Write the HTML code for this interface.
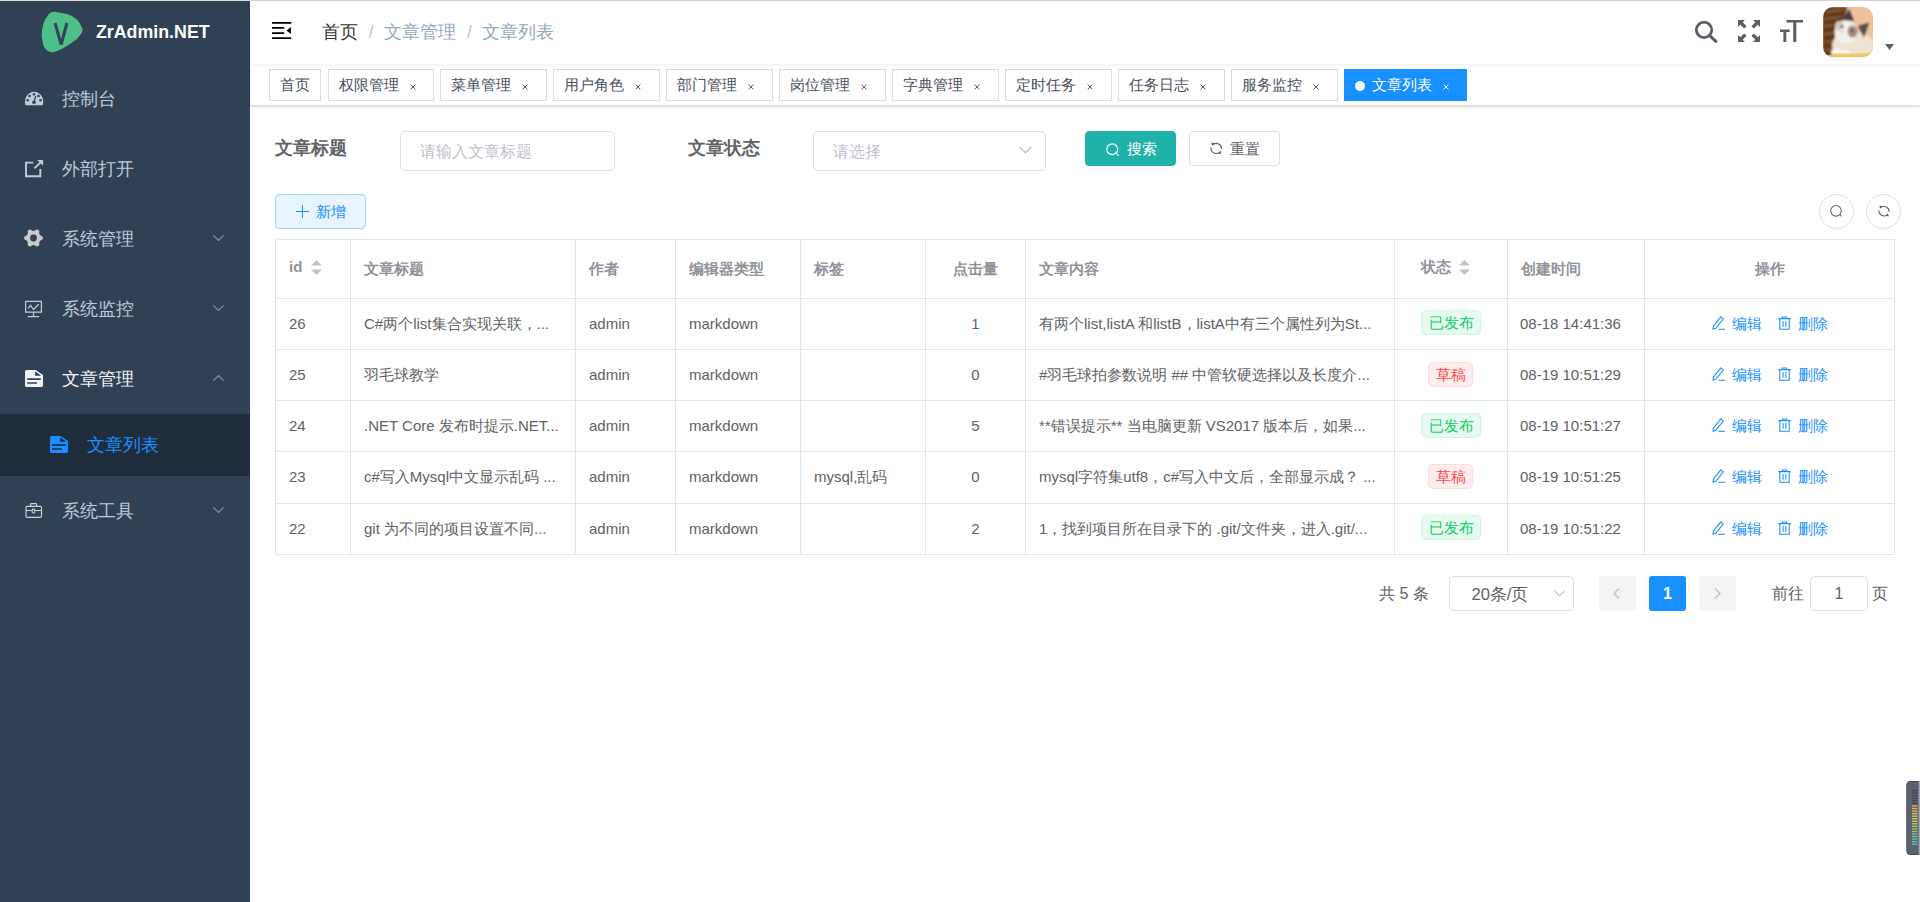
<!DOCTYPE html>
<html><head><meta charset="utf-8">
<style>
*{box-sizing:border-box;margin:0;padding:0}
html,body{width:1920px;height:902px;overflow:hidden;background:#fff;font-family:"Liberation Sans",sans-serif;}
.abs{position:absolute}
#topline{position:absolute;left:0;top:0;width:1920px;height:1px;background:#d2d2d2;z-index:5}
#topline i{position:absolute;left:0;top:0;width:250px;height:1px;background:#dedcd9}
#side{position:absolute;left:0;top:1px;width:250px;height:901px;background:#304156}
#logo{position:absolute;left:42px;top:10px;width:40px;height:40px}
#logotxt{position:absolute;left:96px;top:21px;font-size:17.8px;font-weight:bold;color:#fff;line-height:21px}
.mi{position:absolute;left:0;width:250px;height:70px;color:#bfcbd9;font-size:17.5px}
.mi .ic{position:absolute;left:25px;top:26px;width:18px;height:18px}
.mi .tx{position:absolute;left:62px;top:0;line-height:70px}
.mi .ch{position:absolute;left:212.5px;top:30.8px;width:11px;height:6px}
#sub{position:absolute;left:0;top:413px;width:250px;height:62px;background:#1f2d3d}

#nav{position:absolute;left:250px;top:1px;width:1670px;height:63px;background:#fff;z-index:2;box-shadow:0 1px 4px rgba(0,21,41,.08)}
#tags{position:absolute;left:250px;top:64px;width:1670px;height:42px;background:#fff;border-bottom:1px solid #d8dce5;box-shadow:0 1px 3px 0 rgba(0,0,0,.12),0 0 3px 0 rgba(0,0,0,.04);z-index:1}
.tag{position:absolute;top:5px;height:32px;border:1px solid #d8dce5;color:#495060;background:#fff;font-size:15px;line-height:30px;padding-left:10px;white-space:nowrap}
.tag .x{position:absolute;top:0;font-size:11px;color:#495060}

.lbl{position:absolute;font-size:17.5px;font-weight:bold;color:#606266;line-height:20px;white-space:nowrap}
.inp{position:absolute;border:1px solid #dcdfe6;border-radius:5px;background:#fff;height:40px}
.ph{position:absolute;left:19px;top:0;line-height:38px;font-size:16.25px;color:#c0c4cc;white-space:nowrap}
.btn{position:absolute;height:35px;border-radius:4px;font-size:15px;line-height:33px;white-space:nowrap}
#tbl{position:absolute;left:275px;top:239px;width:1620px;height:316px;border-left:1px solid #dfe6ec;border-top:1px solid #dfe6ec}
.row{position:absolute;left:0;width:1619px;border-bottom:1px solid #dfe6ec}
.c{position:absolute;top:0;height:100%;border-right:1px solid #dfe6ec;font-size:15px;color:#606266;white-space:nowrap;overflow:hidden;padding-left:13px}
.hd .c{color:#909399;font-weight:bold}
.stag{position:absolute;top:11px;height:25px;border:1px solid;border-radius:5px;font-size:15px;line-height:23px;text-align:center}
.ok{background:#e7faf0;border-color:#d0f5e0;color:#13ce66}
.dr{background:#ffeded;border-color:#ffdbdb;color:#ff4949}
.op{position:absolute;top:0;font-size:15px;color:#1890ff;white-space:nowrap}
</style></head><body>
<div id="topline"><i></i></div>
<div id="side">
  <svg id="logo" viewBox="0 0 40 40" style="overflow:visible"><path d="M14.30 0.90C17.34 1.23 23.58 2.37 27.00 3.65C30.42 4.93 32.67 6.47 34.80 8.60C36.93 10.72 38.92 14.37 39.80 16.40C40.68 18.43 40.93 18.87 40.10 20.80C39.27 22.73 37.53 25.50 34.80 28.00C32.07 30.50 27.12 33.77 23.70 35.80C20.28 37.83 16.79 39.33 14.30 40.20C11.81 41.07 10.69 41.55 8.75 41.00C6.81 40.45 4.08 39.07 2.65 36.90C1.22 34.73 0.62 30.77 0.16 28.00C-0.30 25.23 -0.42 23.15 -0.10 20.30C0.22 17.45 1.08 13.58 2.10 10.90C3.12 8.22 4.89 5.73 6.00 4.20C7.11 2.67 7.37 2.25 8.75 1.70C10.13 1.15 11.26 0.57 14.30 0.90Z" fill="#4ebf88"/><path d="M13.1 12L19.2 33.6M24.9 12L19.2 33.6" stroke="#34455a" stroke-width="3.1" stroke-linejoin="round"/></svg>
  <div id="logotxt">ZrAdmin.NET</div>

  <div class="mi" style="top:63px"><svg class="ic" style="top:26px;height:16px;width:19px" viewBox="0 0 19 16"><path d="M0.6 15.3A9.1 10 0 1 1 17.6 15.3Z" fill="#bfcbd9"/><g fill="#304156"><circle cx="2.7" cy="10.3" r="1.3"/><circle cx="4.5" cy="6" r="1.3"/><circle cx="9" cy="4.2" r="1.3"/><circle cx="13.5" cy="6" r="1.3"/><circle cx="15.5" cy="10.3" r="1.3"/><circle cx="9" cy="12.3" r="1.8"/></g><path d="M10.6 6.3L9 12.3" stroke="#304156" stroke-width="1.3" stroke-linecap="round"/></svg><span class="tx">控制台</span></div>
  <div class="mi" style="top:133px"><svg class="ic" style="top:25px;width:19px;height:19px" viewBox="0 0 19 19"><path d="M8.3 3.6H1V17.2H15.3V10" fill="none" stroke="#bfcbd9" stroke-width="1.9"/><path d="M12.2 0.9H18.1V6.8Z" fill="#bfcbd9"/><path d="M9.4 9.4L16.2 2.8" stroke="#bfcbd9" stroke-width="1.9"/></svg><span class="tx">外部打开</span></div>
  <div class="mi" style="top:203px"><svg class="ic" style="left:24px;top:25px;width:19px;height:18px" viewBox="0 0 19 18"><path fill="#c9cacd" fill-rule="evenodd" d="M18.85 9.00 L18.80 9.49 L18.66 9.96 L18.42 10.41 L18.08 10.82 L17.42 11.12 L16.76 11.36 L16.37 11.64 L16.07 11.92 L15.81 12.22 L15.61 12.52 L15.44 12.86 L15.31 13.22 L15.22 13.63 L15.17 14.11 L15.30 14.80 L15.37 15.52 L15.19 16.02 L14.92 16.45 L14.57 16.81 L14.18 17.10 L13.73 17.30 L13.25 17.42 L12.74 17.44 L12.21 17.34 L11.62 16.92 L11.09 16.46 L10.65 16.27 L10.25 16.15 L9.87 16.07 L9.50 16.05 L9.13 16.07 L8.75 16.15 L8.35 16.27 L7.91 16.46 L7.38 16.92 L6.79 17.34 L6.26 17.44 L5.75 17.42 L5.27 17.30 L4.83 17.10 L4.43 16.81 L4.08 16.45 L3.81 16.02 L3.63 15.52 L3.70 14.80 L3.83 14.11 L3.78 13.63 L3.69 13.22 L3.56 12.86 L3.39 12.52 L3.19 12.22 L2.93 11.92 L2.63 11.64 L2.24 11.36 L1.58 11.12 L0.92 10.82 L0.58 10.41 L0.34 9.96 L0.20 9.49 L0.15 9.00 L0.20 8.51 L0.34 8.04 L0.58 7.59 L0.92 7.18 L1.58 6.88 L2.24 6.64 L2.63 6.36 L2.93 6.08 L3.19 5.78 L3.39 5.48 L3.56 5.14 L3.69 4.78 L3.78 4.37 L3.83 3.89 L3.70 3.20 L3.63 2.48 L3.81 1.98 L4.08 1.55 L4.43 1.19 L4.82 0.90 L5.27 0.70 L5.75 0.58 L6.26 0.56 L6.79 0.66 L7.38 1.08 L7.91 1.54 L8.35 1.73 L8.75 1.85 L9.13 1.93 L9.50 1.95 L9.87 1.93 L10.25 1.85 L10.65 1.73 L11.09 1.54 L11.62 1.08 L12.21 0.66 L12.74 0.56 L13.25 0.58 L13.73 0.70 L14.18 0.90 L14.57 1.19 L14.92 1.55 L15.19 1.98 L15.37 2.48 L15.30 3.20 L15.17 3.89 L15.22 4.37 L15.31 4.78 L15.44 5.14 L15.61 5.48 L15.81 5.78 L16.07 6.08 L16.37 6.36 L16.76 6.64 L17.42 6.88 L18.08 7.18 L18.42 7.59 L18.66 8.04 L18.80 8.51Z M9.5 5.6A3.4 3.4 0 1 0 9.5 12.4A3.4 3.4 0 1 0 9.5 5.6Z"/></svg><span class="tx">系统管理</span><svg class="ch" viewBox="0 0 11 6"><path d="M0.4 0.4L5.5 5.5L10.6 0.4" fill="none" stroke="#8a94a3" stroke-width="1.1"/></svg></div>
  <div class="mi" style="top:273px"><svg class="ic" style="top:26px" viewBox="0 0 18 18"><path d="M0.6 1.4H16.4V12.2H0.6Z" fill="none" stroke="#bfcbd9" stroke-width="1.25"/><path d="M3.2 8.4L5.5 5.3L8.5 9.5L13.7 4.3" fill="none" stroke="#bfcbd9" stroke-width="1.25"/><path d="M8.5 12.5V16.4M3.2 16.5H13.8" fill="none" stroke="#bfcbd9" stroke-width="1.25" stroke-linecap="round"/></svg><span class="tx">系统监控</span><svg class="ch" viewBox="0 0 11 6"><path d="M0.4 0.4L5.5 5.5L10.6 0.4" fill="none" stroke="#8a94a3" stroke-width="1.1"/></svg></div>
  <div class="mi" style="top:343px;color:#f4f4f5"><svg class="ic" style="top:26px;height:17px" viewBox="0 0 18 17"><path d="M1.8 0H10.7L18 5V15.2C18 16.2 17.2 17 16.2 17H1.8C0.8 17 0 16.2 0 15.2V1.8C0 0.8 0.8 0 1.8 0Z" fill="#f4f4f5"/><path d="M10.2 1.2V5.8H16.2Z" fill="#304156"/><path d="M2.2 9.15H15.8M2.2 12.95H12" stroke="#304156" stroke-width="1.6"/></svg><span class="tx">文章管理</span><svg class="ch" style="top:31px" viewBox="0 0 11 6"><path d="M0.4 5.6L5.5 0.5L10.6 5.6" fill="none" stroke="#8a94a3" stroke-width="1.1"/></svg></div>
  <div id="sub"><svg class="abs" style="left:50px;top:22px;width:18px;height:17px" viewBox="0 0 18 17"><path d="M1.8 0H10.7L18 5V15.2C18 16.2 17.2 17 16.2 17H1.8C0.8 17 0 16.2 0 15.2V1.8C0 0.8 0.8 0 1.8 0Z" fill="#1890ff"/><path d="M10.2 1.2V5.8H16.2Z" fill="#1f2d3d"/><path d="M2.2 9.15H15.8M2.2 12.95H12" stroke="#1f2d3d" stroke-width="1.6"/></svg><span class="abs" style="left:87px;top:0;line-height:62px;font-size:17.5px;color:#1890ff">文章列表</span></div>
  <div class="mi" style="top:475px"><svg class="ic" style="top:27px;height:17px" viewBox="0 0 18 17"><g fill="none" stroke="#cdd0d5" stroke-width="1.15"><rect x="1" y="3.3" width="15.5" height="11" rx="1"/><path d="M5.6 3.3V1.3Q5.6 0.6 6.3 0.6H10.9Q11.6 0.6 11.6 1.3V3.3M1 7.5H7.2M9.8 7.5H16.5"/><rect x="7.2" y="6.1" width="2.6" height="3.9" rx="1.1"/></g></svg><span class="tx">系统工具</span><svg class="ch" viewBox="0 0 11 6"><path d="M0.4 0.4L5.5 5.5L10.6 0.4" fill="none" stroke="#8a94a3" stroke-width="1.1"/></svg></div>
</div>

<div id="nav">
  <svg class="abs" style="left:22px;top:20px;width:20px;height:19px" viewBox="0 0 20 19"><path d="M0.7 1.9H18.5M0.7 6.9H11.5M0.7 12.1H11.5M0.7 17.1H18.5" stroke="#000" stroke-width="1.8" stroke-linecap="round"/><path d="M18.9 5.9L14.6 9.4L18.9 12.9Z" fill="#000"/></svg>
  <div class="abs" style="left:72px;top:0;line-height:63px;font-size:17.5px;color:#303133;white-space:nowrap">首页<span style="color:#c0c4cc;margin:0 10.5px 0 10.75px">/</span><span style="color:#97a8be">文章管理</span><span style="color:#c0c4cc;margin:0 10.5px 0 10.75px">/</span><span style="color:#97a8be">文章列表</span></div>
  <svg class="abs" style="left:1445px;top:20px;width:24px;height:23px" viewBox="0 0 24 23"><circle cx="9.06" cy="8.9" r="7.7" fill="none" stroke="#5a5e66" stroke-width="2.8"/><path d="M15 14.8L20.9 20.3" stroke="#5a5e66" stroke-width="3.1" stroke-linecap="round"/></svg>
  <svg class="abs" style="left:1488px;top:19px;width:22px;height:22px" viewBox="0 0 22 22"><g fill="#5a5e66"><path d="M0 0H7L4.7 2.3L8.6 6.2L6.2 8.6L2.3 4.7L0 7Z"/><path d="M22 0V7L19.7 4.7L15.8 8.6L13.4 6.2L17.3 2.3L15 0Z"/><path d="M0 22V15L2.3 17.3L6.2 13.4L8.6 15.8L4.7 19.7L7 22Z"/><path d="M22 22H15L17.3 19.7L13.4 15.8L15.8 13.4L19.7 17.3L22 15Z"/></g></svg>
  <svg class="abs" style="left:1530px;top:19px;width:23px;height:22px" viewBox="0 0 23 22"><g fill="#5a5e66"><path d="M6.5 0H23V2.4H16.3V22H13.2V2.4H6.5Z"/><path d="M0 9.5H9.7V11.9H6.3V22H3.4V11.9H0Z"/></g></svg>
  <svg class="abs" style="left:1573px;top:6px;width:50px;height:50px" viewBox="0 0 50 50"><defs><clipPath id="av"><rect width="50" height="50" rx="10"/></clipPath><filter id="bl"><feGaussianBlur stdDeviation="0.8"/></filter></defs><g clip-path="url(#av)"><rect width="50" height="50" fill="#efc29b"/><g filter="url(#bl)"><path d="M0 0H24C23 8 18 16 13 24C11 32 10 40 9 50H0Z" fill="#5e3b1f"/><path d="M2 5L20 3M2 12L17 10M2 19L14 18M2 27L11 26M2 35L10 34M2 43L9 42" stroke="#8e5d32" stroke-width="2.2"/><ellipse cx="30" cy="38" rx="21" ry="13" fill="#efe3d3"/><ellipse cx="23" cy="25" rx="11.5" ry="11.5" fill="#f3efeb"/><path d="M19 13L26 2L31 14Z" fill="#4b3d3c"/><path d="M35 19L46 15.5L41 31Z" fill="#5b4b49"/><ellipse cx="29.5" cy="24.5" rx="5" ry="6" fill="#a58a7a"/><ellipse cx="16" cy="19" rx="4" ry="5" fill="#d5cac4"/><circle cx="19" cy="19.5" r="1.5" fill="#33477a"/><circle cx="29" cy="23.5" r="1.5" fill="#33477a"/><circle cx="19" cy="24.8" r="1" fill="#e59a92"/><ellipse cx="13" cy="45" rx="5" ry="3.5" fill="#fbf8f5"/><ellipse cx="22" cy="46" rx="5" ry="3.5" fill="#f8f3ee"/></g><path d="M8 46.5H50V50H8Z" fill="#f2c35e" filter="url(#bl)"/><rect x="0" y="48" width="50" height="2" fill="#f2c35e"/></g></svg>
  <svg class="abs" style="left:1635px;top:43px;width:9px;height:6px" viewBox="0 0 9 6"><path d="M0 0H9L4.5 6Z" fill="#5a5e66"/></svg>
</div>
<div id="tags">
  <div class="tag" style="left:19px;width:52px">首页</div>
  <div class="tag" style="left:78px;width:106px">权限管理<svg class="x" style="left:80.5px;top:14px;width:6px;height:6px" viewBox="0 0 6 6"><path d="M0.5 0.5L5.5 5.5M5.5 0.5L0.5 5.5" stroke="#495060" stroke-width="0.9"/></svg></div>
<div class="tag" style="left:190px;width:107px">菜单管理<svg class="x" style="left:80.5px;top:14px;width:6px;height:6px" viewBox="0 0 6 6"><path d="M0.5 0.5L5.5 5.5M5.5 0.5L0.5 5.5" stroke="#495060" stroke-width="0.9"/></svg></div>
<div class="tag" style="left:303px;width:107px">用户角色<svg class="x" style="left:80.5px;top:14px;width:6px;height:6px" viewBox="0 0 6 6"><path d="M0.5 0.5L5.5 5.5M5.5 0.5L0.5 5.5" stroke="#495060" stroke-width="0.9"/></svg></div>
<div class="tag" style="left:416px;width:107px">部门管理<svg class="x" style="left:80.5px;top:14px;width:6px;height:6px" viewBox="0 0 6 6"><path d="M0.5 0.5L5.5 5.5M5.5 0.5L0.5 5.5" stroke="#495060" stroke-width="0.9"/></svg></div>
<div class="tag" style="left:529px;width:107px">岗位管理<svg class="x" style="left:80.5px;top:14px;width:6px;height:6px" viewBox="0 0 6 6"><path d="M0.5 0.5L5.5 5.5M5.5 0.5L0.5 5.5" stroke="#495060" stroke-width="0.9"/></svg></div>
<div class="tag" style="left:642px;width:107px">字典管理<svg class="x" style="left:80.5px;top:14px;width:6px;height:6px" viewBox="0 0 6 6"><path d="M0.5 0.5L5.5 5.5M5.5 0.5L0.5 5.5" stroke="#495060" stroke-width="0.9"/></svg></div>
<div class="tag" style="left:755px;width:107px">定时任务<svg class="x" style="left:80.5px;top:14px;width:6px;height:6px" viewBox="0 0 6 6"><path d="M0.5 0.5L5.5 5.5M5.5 0.5L0.5 5.5" stroke="#495060" stroke-width="0.9"/></svg></div>
<div class="tag" style="left:868px;width:107px">任务日志<svg class="x" style="left:80.5px;top:14px;width:6px;height:6px" viewBox="0 0 6 6"><path d="M0.5 0.5L5.5 5.5M5.5 0.5L0.5 5.5" stroke="#495060" stroke-width="0.9"/></svg></div>
<div class="tag" style="left:981px;width:107px">服务监控<svg class="x" style="left:80.5px;top:14px;width:6px;height:6px" viewBox="0 0 6 6"><path d="M0.5 0.5L5.5 5.5M5.5 0.5L0.5 5.5" stroke="#495060" stroke-width="0.9"/></svg></div>
<div class="tag" style="left:1094px;width:123px;background:#1890ff;border-color:#1890ff;color:#fff;padding-left:27px"><i class="abs" style="left:10px;top:11px;width:10px;height:10px;border-radius:50%;background:#fff"></i>文章列表<svg class="x" style="left:98px;top:14px;width:6px;height:6px" viewBox="0 0 6 6"><path d="M0.5 0.5L5.5 5.5M5.5 0.5L0.5 5.5" stroke="#fff" stroke-width="0.9"/></svg></div>

</div>

<div class="lbl" style="left:275px;top:138px">文章标题</div>
<div class="inp" style="left:400px;top:131px;width:215px"><span class="ph">请输入文章标题</span></div>
<div class="lbl" style="left:688px;top:138px">文章状态</div>
<div class="inp" style="left:813px;top:131px;width:233px"><span class="ph">请选择</span><svg class="abs" style="left:205px;top:14px;width:13px;height:8px" viewBox="0 0 13 8"><path d="M0.5 0.8L6.5 6.8L12.5 0.8" fill="none" stroke="#c0c4cc" stroke-width="1.3"/></svg></div>
<div class="btn" style="left:1085px;top:131px;width:91px;background:#20b2aa;color:#fff;border:1px solid #20b2aa"><svg class="abs" style="left:19.5px;top:11px;width:14px;height:14px" viewBox="0 0 14 14"><circle cx="6.2" cy="6.2" r="5.4" fill="none" stroke="#fff" stroke-width="1.15"/><path d="M10.1 10.1L12.6 12.6" stroke="#fff" stroke-width="1.15"/></svg><span class="abs" style="left:40.5px;top:0">搜索</span></div>
<div class="btn" style="left:1189px;top:131px;width:91px;background:#fff;color:#606266;border:1px solid #dcdfe6"><svg class="abs" style="left:20px;top:9.5px;width:12.5px;height:12.5px" viewBox="0 0 12.2 12.2"><path d="M3 2.4A5.2 5.2 0 0 1 11.3 6.8" fill="none" stroke="#606266" stroke-width="1.1"/><path d="M9.2 10.1A5.2 5.2 0 0 1 0.9 5.4" fill="none" stroke="#606266" stroke-width="1.1"/><path d="M1.3 0.6L4.5 1.3L2.2 3.8Z" fill="#606266"/><path d="M11 11.6L7.8 10.9L10.1 8.4Z" fill="#606266"/></svg><span class="abs" style="left:40px;top:0">重置</span></div>
<div class="btn" style="left:275px;top:194px;width:91px;background:#e8f4ff;color:#1890ff;border:1px solid #a3d3ff"><svg class="abs" style="left:20px;top:10px;width:13px;height:13px" viewBox="0 0 13 13"><path d="M6.5 0V13M0 6.5H13" stroke="#1890ff" stroke-width="1"/></svg><span class="abs" style="left:40px;top:0">新增</span></div>
<div class="abs" style="left:1819px;top:194px;width:35px;height:35px;border:1px solid #dcdfe6;border-radius:50%"><svg class="abs" style="left:10px;top:9px;width:14px;height:14px" viewBox="0 0 14 14"><circle cx="6" cy="6.8" r="5.3" fill="none" stroke="#606266" stroke-width="1.05"/><path d="M9.8 10.6L11.6 12.4" stroke="#606266" stroke-width="1.05"/></svg></div>
<div class="abs" style="left:1866px;top:194px;width:35px;height:35px;border:1px solid #dcdfe6;border-radius:50%"><svg class="abs" style="left:10.5px;top:10.2px;width:12px;height:12px" viewBox="0 0 12.2 12.2"><path d="M3 2.4A5.2 5.2 0 0 1 11.3 6.8" fill="none" stroke="#606266" stroke-width="1.1"/><path d="M9.2 10.1A5.2 5.2 0 0 1 0.9 5.4" fill="none" stroke="#606266" stroke-width="1.1"/><path d="M1.3 0.6L4.5 1.3L2.2 3.8Z" fill="#606266"/><path d="M11 11.6L7.8 10.9L10.1 8.4Z" fill="#606266"/></svg></div>
<div id="tbl">
<div class="row hd" style="top:0;height:59px"><div class="c" style="left:0px;width:75px;line-height:58px"><span class="abs" style="left:13px;top:-2px">id</span><svg class="abs" style="left:35px;top:20px;width:11px;height:15px" viewBox="0 0 11 15"><path d="M5.5 0L11 5.5H0Z" fill="#c0c4cc"/><path d="M5.5 15L11 9.5H0Z" fill="#c0c4cc"/></svg></div><div class="c" style="left:75px;width:225px;line-height:58px">文章标题</div><div class="c" style="left:300px;width:100px;line-height:58px">作者</div><div class="c" style="left:400px;width:125px;line-height:58px">编辑器类型</div><div class="c" style="left:525px;width:125px;line-height:58px">标签</div><div class="c" style="left:650px;width:100px;line-height:58px;text-align:center;padding-left:0">点击量</div><div class="c" style="left:750px;width:369px;line-height:58px">文章内容</div><div class="c" style="left:1119px;width:113px;line-height:58px;padding-left:0"><span class="abs" style="left:26px;top:-2px">状态</span><svg class="abs" style="left:64px;top:20px;width:11px;height:15px" viewBox="0 0 11 15"><path d="M5.5 0L11 5.5H0Z" fill="#c0c4cc"/><path d="M5.5 15L11 9.5H0Z" fill="#c0c4cc"/></svg></div><div class="c" style="left:1232px;width:137px;line-height:58px">创建时间</div><div class="c" style="left:1369px;width:250px;line-height:58px;text-align:center;padding-left:0">操作</div></div>
<div class="row" style="top:59px;height:51px"><div class="c" style="left:0px;width:75px;line-height:50px">26</div><div class="c" style="left:75px;width:225px;line-height:50px">C#两个list集合实现关联，...</div><div class="c" style="left:300px;width:100px;line-height:50px">admin</div><div class="c" style="left:400px;width:125px;line-height:50px">markdown</div><div class="c" style="left:525px;width:125px;line-height:50px"></div><div class="c" style="left:650px;width:100px;line-height:50px;text-align:center;padding-left:0">1</div><div class="c" style="left:750px;width:369px;line-height:50px">有两个list,listA 和listB，listA中有三个属性列为St...</div><div class="c" style="left:1119px;width:113px;line-height:50px"><span class="stag ok" style="left:26px;width:60px;top:11px">已发布</span></div><div class="c" style="left:1232px;width:137px;line-height:50px;padding-left:12px">08-18 14:41:36</div><div class="c" style="left:1369px;width:250px;line-height:50px"><span class="op" style="left:66px"><svg class="abs" style="left:0;top:17px;width:15px;height:15px" viewBox="0 0 15 15"><path d="M1.9 13.2L5.07 11.91L12.32 2.99L9.76 0.91L2.51 9.83Z" fill="none" stroke="#1890ff" stroke-width="1.05" stroke-linejoin="round"/><path d="M7.5 13.3H13.9" stroke="#1890ff" stroke-width="1.05"/></svg><span class="abs" style="left:21px">编辑</span></span><span class="op" style="left:133px"><svg class="abs" style="left:0;top:17px;width:15px;height:15px" viewBox="0 0 15 15"><path d="M0.3 2.6H12.7M4.3 2.6V0.9H8.7V2.6M1.8 2.6V13.3H11.2V2.6M5.1 5V10.8M7.9 5V10.8" fill="none" stroke="#1890ff" stroke-width="1.05"/></svg><span class="abs" style="left:20px">删除</span></span></div></div>
<div class="row" style="top:110px;height:51px"><div class="c" style="left:0px;width:75px;line-height:50px">25</div><div class="c" style="left:75px;width:225px;line-height:50px">羽毛球教学</div><div class="c" style="left:300px;width:100px;line-height:50px">admin</div><div class="c" style="left:400px;width:125px;line-height:50px">markdown</div><div class="c" style="left:525px;width:125px;line-height:50px"></div><div class="c" style="left:650px;width:100px;line-height:50px;text-align:center;padding-left:0">0</div><div class="c" style="left:750px;width:369px;line-height:50px">#羽毛球拍参数说明 ## 中管软硬选择以及长度介...</div><div class="c" style="left:1119px;width:113px;line-height:50px"><span class="stag dr" style="left:33px;width:45px;top:12px">草稿</span></div><div class="c" style="left:1232px;width:137px;line-height:50px;padding-left:12px">08-19 10:51:29</div><div class="c" style="left:1369px;width:250px;line-height:50px"><span class="op" style="left:66px"><svg class="abs" style="left:0;top:17px;width:15px;height:15px" viewBox="0 0 15 15"><path d="M1.9 13.2L5.07 11.91L12.32 2.99L9.76 0.91L2.51 9.83Z" fill="none" stroke="#1890ff" stroke-width="1.05" stroke-linejoin="round"/><path d="M7.5 13.3H13.9" stroke="#1890ff" stroke-width="1.05"/></svg><span class="abs" style="left:21px">编辑</span></span><span class="op" style="left:133px"><svg class="abs" style="left:0;top:17px;width:15px;height:15px" viewBox="0 0 15 15"><path d="M0.3 2.6H12.7M4.3 2.6V0.9H8.7V2.6M1.8 2.6V13.3H11.2V2.6M5.1 5V10.8M7.9 5V10.8" fill="none" stroke="#1890ff" stroke-width="1.05"/></svg><span class="abs" style="left:20px">删除</span></span></div></div>
<div class="row" style="top:161px;height:51px"><div class="c" style="left:0px;width:75px;line-height:50px">24</div><div class="c" style="left:75px;width:225px;line-height:50px">.NET Core 发布时提示.NET...</div><div class="c" style="left:300px;width:100px;line-height:50px">admin</div><div class="c" style="left:400px;width:125px;line-height:50px">markdown</div><div class="c" style="left:525px;width:125px;line-height:50px"></div><div class="c" style="left:650px;width:100px;line-height:50px;text-align:center;padding-left:0">5</div><div class="c" style="left:750px;width:369px;line-height:50px">**错误提示** 当电脑更新 VS2017 版本后，如果...</div><div class="c" style="left:1119px;width:113px;line-height:50px"><span class="stag ok" style="left:26px;width:60px;top:12px">已发布</span></div><div class="c" style="left:1232px;width:137px;line-height:50px;padding-left:12px">08-19 10:51:27</div><div class="c" style="left:1369px;width:250px;line-height:50px"><span class="op" style="left:66px"><svg class="abs" style="left:0;top:17px;width:15px;height:15px" viewBox="0 0 15 15"><path d="M1.9 13.2L5.07 11.91L12.32 2.99L9.76 0.91L2.51 9.83Z" fill="none" stroke="#1890ff" stroke-width="1.05" stroke-linejoin="round"/><path d="M7.5 13.3H13.9" stroke="#1890ff" stroke-width="1.05"/></svg><span class="abs" style="left:21px">编辑</span></span><span class="op" style="left:133px"><svg class="abs" style="left:0;top:17px;width:15px;height:15px" viewBox="0 0 15 15"><path d="M0.3 2.6H12.7M4.3 2.6V0.9H8.7V2.6M1.8 2.6V13.3H11.2V2.6M5.1 5V10.8M7.9 5V10.8" fill="none" stroke="#1890ff" stroke-width="1.05"/></svg><span class="abs" style="left:20px">删除</span></span></div></div>
<div class="row" style="top:212px;height:52px"><div class="c" style="left:0px;width:75px;line-height:50px">23</div><div class="c" style="left:75px;width:225px;line-height:50px">c#写入Mysql中文显示乱码 ...</div><div class="c" style="left:300px;width:100px;line-height:50px">admin</div><div class="c" style="left:400px;width:125px;line-height:50px">markdown</div><div class="c" style="left:525px;width:125px;line-height:50px">mysql,乱码</div><div class="c" style="left:650px;width:100px;line-height:50px;text-align:center;padding-left:0">0</div><div class="c" style="left:750px;width:369px;line-height:50px">mysql字符集utf8，c#写入中文后，全部显示成？ ...</div><div class="c" style="left:1119px;width:113px;line-height:50px"><span class="stag dr" style="left:33px;width:45px;top:12px">草稿</span></div><div class="c" style="left:1232px;width:137px;line-height:50px;padding-left:12px">08-19 10:51:25</div><div class="c" style="left:1369px;width:250px;line-height:50px"><span class="op" style="left:66px"><svg class="abs" style="left:0;top:17px;width:15px;height:15px" viewBox="0 0 15 15"><path d="M1.9 13.2L5.07 11.91L12.32 2.99L9.76 0.91L2.51 9.83Z" fill="none" stroke="#1890ff" stroke-width="1.05" stroke-linejoin="round"/><path d="M7.5 13.3H13.9" stroke="#1890ff" stroke-width="1.05"/></svg><span class="abs" style="left:21px">编辑</span></span><span class="op" style="left:133px"><svg class="abs" style="left:0;top:17px;width:15px;height:15px" viewBox="0 0 15 15"><path d="M0.3 2.6H12.7M4.3 2.6V0.9H8.7V2.6M1.8 2.6V13.3H11.2V2.6M5.1 5V10.8M7.9 5V10.8" fill="none" stroke="#1890ff" stroke-width="1.05"/></svg><span class="abs" style="left:20px">删除</span></span></div></div>
<div class="row" style="top:264px;height:51px"><div class="c" style="left:0px;width:75px;line-height:50px">22</div><div class="c" style="left:75px;width:225px;line-height:50px">git 为不同的项目设置不同...</div><div class="c" style="left:300px;width:100px;line-height:50px">admin</div><div class="c" style="left:400px;width:125px;line-height:50px">markdown</div><div class="c" style="left:525px;width:125px;line-height:50px"></div><div class="c" style="left:650px;width:100px;line-height:50px;text-align:center;padding-left:0">2</div><div class="c" style="left:750px;width:369px;line-height:50px">1，找到项目所在目录下的 .git/文件夹，进入.git/...</div><div class="c" style="left:1119px;width:113px;line-height:50px"><span class="stag ok" style="left:26px;width:60px;top:11px">已发布</span></div><div class="c" style="left:1232px;width:137px;line-height:50px;padding-left:12px">08-19 10:51:22</div><div class="c" style="left:1369px;width:250px;line-height:50px"><span class="op" style="left:66px"><svg class="abs" style="left:0;top:17px;width:15px;height:15px" viewBox="0 0 15 15"><path d="M1.9 13.2L5.07 11.91L12.32 2.99L9.76 0.91L2.51 9.83Z" fill="none" stroke="#1890ff" stroke-width="1.05" stroke-linejoin="round"/><path d="M7.5 13.3H13.9" stroke="#1890ff" stroke-width="1.05"/></svg><span class="abs" style="left:21px">编辑</span></span><span class="op" style="left:133px"><svg class="abs" style="left:0;top:17px;width:15px;height:15px" viewBox="0 0 15 15"><path d="M0.3 2.6H12.7M4.3 2.6V0.9H8.7V2.6M1.8 2.6V13.3H11.2V2.6M5.1 5V10.8M7.9 5V10.8" fill="none" stroke="#1890ff" stroke-width="1.05"/></svg><span class="abs" style="left:20px">删除</span></span></div></div>
</div>

<div class="abs" style="left:1379px;top:584px;font-size:16px;color:#606266;line-height:20px;white-space:nowrap">共 5 条</div>
<div class="inp" style="left:1449px;top:576px;width:125px;height:35px"><span class="abs" style="left:21.5px;top:1px;line-height:33px;font-size:16.5px;color:#606266">20条/页</span><svg class="abs" style="left:104px;top:13px;width:11px;height:7px" viewBox="0 0 11 7"><path d="M0.5 0.8L5.5 5.8L10.5 0.8" fill="none" stroke="#c0c4cc" stroke-width="1.2"/></svg></div>
<div class="abs" style="left:1599px;top:576px;width:37px;height:35px;background:#f4f4f5;border-radius:3px"><svg class="abs" style="left:14px;top:12px;width:7px;height:11px" viewBox="0 0 7 11"><path d="M6 0.5L1 5.5L6 10.5" fill="none" stroke="#c0c4cc" stroke-width="1.5"/></svg></div>
<div class="abs" style="left:1649px;top:576px;width:37px;height:35px;background:#1890ff;border-radius:3px;color:#fff;font-weight:bold;font-size:16px;line-height:35px;text-align:center">1</div>
<div class="abs" style="left:1699px;top:576px;width:37px;height:35px;background:#f4f4f5;border-radius:3px"><svg class="abs" style="left:15px;top:12px;width:7px;height:11px" viewBox="0 0 7 11"><path d="M1 0.5L6 5.5L1 10.5" fill="none" stroke="#c0c4cc" stroke-width="1.5"/></svg></div>
<div class="abs" style="left:1772px;top:584px;font-size:16px;color:#606266;line-height:20px;white-space:nowrap">前往</div>
<div class="inp" style="left:1810px;top:576px;width:58px;height:35px;text-align:center;line-height:33px;font-size:16px;color:#606266">1</div>
<div class="abs" style="left:1872px;top:584px;font-size:16px;color:#606266;line-height:20px">页</div>
<svg class="abs" style="left:1906px;top:781px;width:14px;height:74px" viewBox="0 0 14 74"><path d="M4 0.5H14V73.5H4Q0.8 73.5 0.8 70V4Q0.8 0.5 4 0.5Z" fill="#5b606d" stroke="#464b56" stroke-width="1"/><rect x="12.6" y="0" width="1.4" height="74" fill="#a3a7b0"/><rect x="6" y="9.00" width="5.5" height="1.3" fill="#434853"/><rect x="6" y="11.55" width="5.5" height="1.3" fill="#434853"/><rect x="6" y="14.10" width="5.5" height="1.3" fill="#434853"/><rect x="6" y="16.65" width="5.5" height="1.3" fill="#434853"/><rect x="6" y="19.20" width="5.5" height="1.3" fill="#434853"/><rect x="6" y="21.75" width="5.5" height="1.3" fill="#434853"/><rect x="6" y="24.30" width="5.5" height="1.3" fill="#e8b048"/><rect x="6" y="26.85" width="5.5" height="1.3" fill="#e6b64a"/><rect x="6" y="29.40" width="5.5" height="1.3" fill="#e4bd4b"/><rect x="6" y="31.95" width="5.5" height="1.3" fill="#e2c34d"/><rect x="6" y="34.50" width="5.5" height="1.3" fill="#e0ca4e"/><rect x="6" y="37.05" width="5.5" height="1.3" fill="#ded050"/><rect x="6" y="39.60" width="5.5" height="1.3" fill="#d2d156"/><rect x="6" y="42.15" width="5.5" height="1.3" fill="#c3cf5d"/><rect x="6" y="44.70" width="5.5" height="1.3" fill="#b3cd65"/><rect x="6" y="47.25" width="5.5" height="1.3" fill="#a3cb6d"/><rect x="6" y="49.80" width="5.5" height="1.3" fill="#94c974"/><rect x="6" y="52.35" width="5.5" height="1.3" fill="#84c97f"/><rect x="6" y="54.90" width="5.5" height="1.3" fill="#73cb8c"/><rect x="6" y="57.45" width="5.5" height="1.3" fill="#62ce99"/><rect x="6" y="60.00" width="5.5" height="1.3" fill="#51d0a7"/><rect x="6" y="62.55" width="5.5" height="1.3" fill="#40d2b4"/></svg>
</body></html>
